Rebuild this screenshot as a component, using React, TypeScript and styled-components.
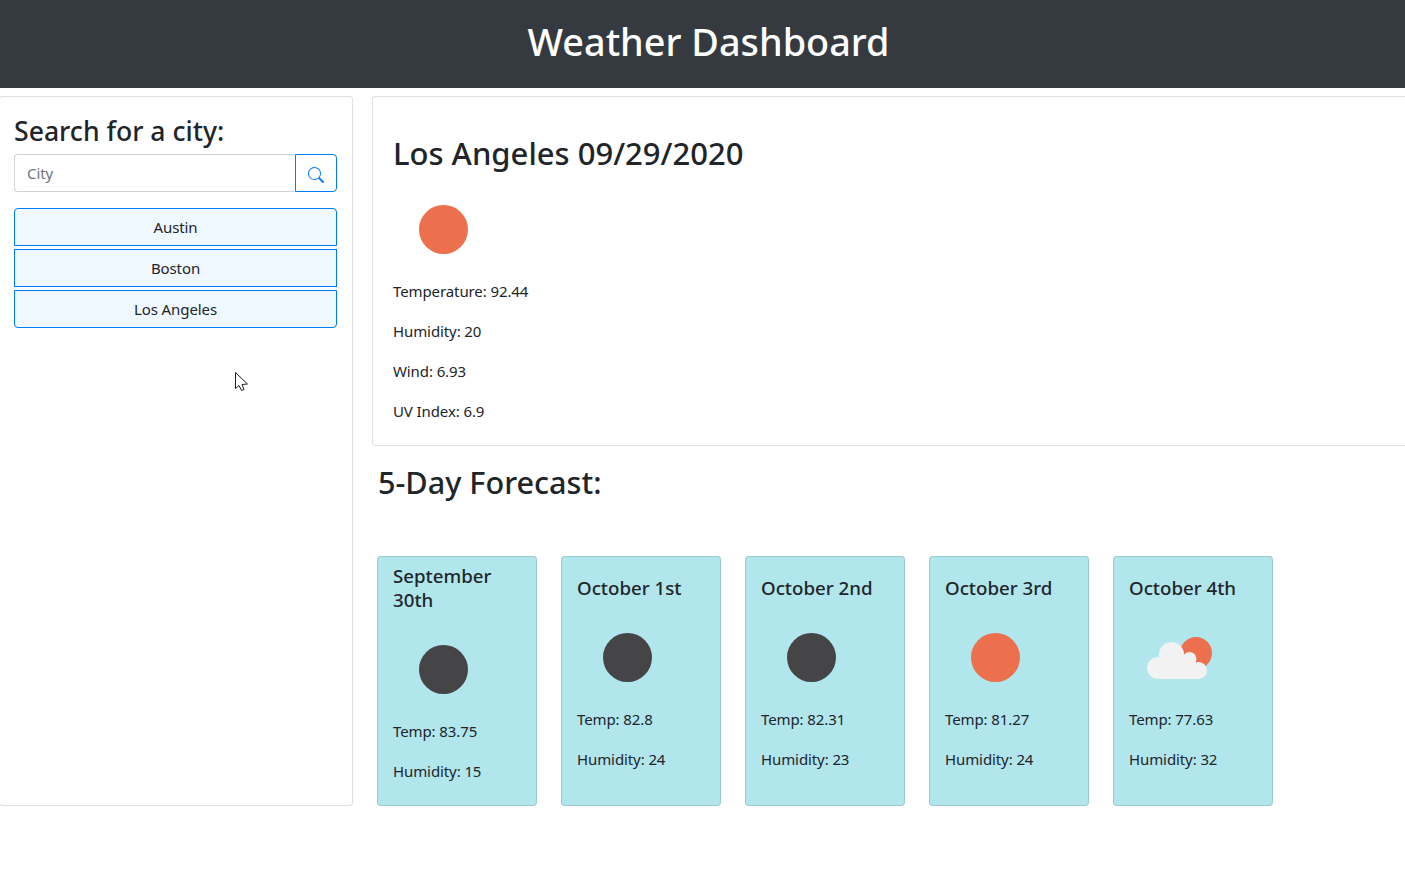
import React from 'react';
import styled, {createGlobalStyle} from 'styled-components';
import {BsSearch} from 'react-icons/bs';

const GlobalStyle = createGlobalStyle`
	html, body {
		margin: 0;
		padding: 0;
		background: #fff;
		overflow: hidden;
	}
	body {
		font-family: "Noto Sans", "Open Sans", sans-serif;
		font-size: 15px;
		line-height: 24px;
		letter-spacing: -0.1px;
		color: #212529;
	}
	* {
		box-sizing: border-box;
	}
`;

type IconKind = 'sun' | 'dark' | 'partly';

interface ForecastDay {
	title: string
	temp: number
	humidity: number
	icon: IconKind
}

const cities = ['Austin', 'Boston', 'Los Angeles'];

const forecast: ForecastDay[] = [
	{title: 'September 30th', temp: 83.75, humidity: 15, icon: 'dark'},
	{title: 'October 1st', temp: 82.8, humidity: 24, icon: 'dark'},
	{title: 'October 2nd', temp: 82.31, humidity: 23, icon: 'dark'},
	{title: 'October 3rd', temp: 81.27, humidity: 24, icon: 'sun'},
	{title: 'October 4th', temp: 77.63, humidity: 32, icon: 'partly'},
];

const WeatherIcon = ({kind}: {kind: IconKind}) => (
	<IconSvg viewBox="0 0 100 100">
		{kind === 'sun' && <circle cx="50.5" cy="49.5" r="24.5" fill="#ec6f4e"/>}
		{kind === 'dark' && <circle cx="50.5" cy="49.5" r="24.5" fill="#454547"/>}
		{kind === 'partly' && (
			<>
				<circle cx="67" cy="45" r="16" fill="#ec6f4e"/>
				<g fill="#f2f2f2">
					<circle cx="29" cy="60" r="11"/>
					<circle cx="42.5" cy="46.5" r="12.5"/>
					<circle cx="60.5" cy="51" r="7"/>
					<circle cx="69.5" cy="62.5" r="8.5"/>
					<rect x="29" y="55" width="40.5" height="16"/>
					<rect x="42" y="48" width="20" height="10"/>
				</g>
			</>
		)}
	</IconSvg>
);

export default function App() {
	return (
		<Page>
			<GlobalStyle/>
			<Header>Weather Dashboard</Header>
			<Content>
				<Sidebar>
					<SearchTitle>Search for a city:</SearchTitle>
					<SearchGroup>
						<CityInput placeholder="City" readOnly/>
						<SearchButton aria-label="Search"><BsSearch size={16}/></SearchButton>
					</SearchGroup>
					<CityList>
						{cities.map((city, i) => (
							<CityButton key={city} $first={i === 0} $last={i === cities.length - 1}>{city}</CityButton>
						))}
					</CityList>
				</Sidebar>
				<Main>
					<CurrentCard>
						<CityTitle>Los Angeles 09/29/2020</CityTitle>
						<WeatherIcon kind="sun"/>
						<Stat>Temperature: 92.44</Stat>
						<Stat>Humidity: 20</Stat>
						<Stat>Wind: 6.93</Stat>
						<Stat>UV Index: 6.9</Stat>
					</CurrentCard>
					<ForecastTitle>5-Day Forecast:</ForecastTitle>
					<ForecastRow>
						{forecast.map(day => (
							<ForecastCard key={day.title}>
								<DayTitle>{day.title}</DayTitle>
								<WeatherIcon kind={day.icon}/>
								<Stat>Temp: {day.temp}</Stat>
								<Stat>Humidity: {day.humidity}</Stat>
							</ForecastCard>
						))}
					</ForecastRow>
				</Main>
			</Content>
			<Cursor viewBox="0 0 14 20">
				<path d="M0.5 0.5 L0.5 16.5 L4 13.5 L6.5 18.5 L9 17.5 L7 12.5 L12.5 12 Z" fill="#fff" stroke="#222" strokeWidth="1"/>
			</Cursor>
		</Page>
	);
}

const Page = styled.div`
	position: relative;
	width: 1405px;
	height: 877px;
	overflow: hidden;
`;

const Header = styled.h1`
	margin: 0;
	height: 88px;
	padding-top: 18px;
	padding-left: 12px;
	background: #343a40;
	color: #fff;
	font-size: 37.8px;
	font-weight: 500;
	letter-spacing: 0;
	line-height: 48px;
	text-align: center;
`;

const Content = styled.div`
	display: grid;
	grid-template-columns: 354px 1fr;
	column-gap: 19px;
	margin: 8px -12px 0 -1px;
`;

const Sidebar = styled.div`
	height: 710px;
	padding: 18px 15px 0 14px;
	background: #fff;
	border: 1px solid rgba(0, 0, 0, .125);
	border-radius: 4px;
`;

const SearchTitle = styled.h3`
	margin: 0 0 5px;
	font-size: 26.6px;
	font-weight: 500;
	letter-spacing: 0;
	line-height: 33.6px;
`;

const SearchGroup = styled.div`
	display: flex;
	height: 38px;
`;

const CityInput = styled.input`
	flex: 1;
	min-width: 0;
	padding: 1px 12px 0;
	font: inherit;
	letter-spacing: inherit;
	color: #495057;
	background: #fff;
	border: 1px solid #ced4da;
	border-right: 0;
	border-radius: 4px 0 0 4px;
	outline: none;

	&::placeholder {
		color: #6c757d;
	}
`;

const SearchButton = styled.button`
	display: flex;
	align-items: center;
	justify-content: center;
	width: 42px;
	padding: 4px 0 0;
	color: #007bff;
	background: #fff;
	border: 1px solid #007bff;
	border-radius: 0 4px 4px 0;
`;

const CityList = styled.div`
	display: flex;
	flex-direction: column;
	gap: 3px;
	margin-top: 16px;
`;

const CityButton = styled.button<{$first: boolean, $last: boolean}>`
	height: 38px;
	padding: 0;
	font: inherit;
	letter-spacing: inherit;
	color: #212529;
	background: #f0f8ff;
	border: 1px solid #007bff;
	border-radius: ${p => p.$first ? '4px 4px 0 0' : p.$last ? '0 0 4px 4px' : '0'};
`;

const Main = styled.div`
	min-width: 0;
`;

const CurrentCard = styled.div`
	height: 350px;
	padding: 37px 20px 0;
	background: #fff;
	border: 1px solid rgba(0, 0, 0, .125);
	border-radius: 4px;
`;

const CityTitle = styled.h2`
	margin: 0 0 8px;
	font-size: 31px;
	font-weight: 500;
	letter-spacing: 0;
	line-height: 38.4px;
`;

const IconSvg = styled.svg`
	display: block;
	width: 100px;
	height: 100px;
`;

const Stat = styled.p`
	margin: 0 0 16px;
	padding-bottom: 2px;
	line-height: 22px;
`;

const ForecastTitle = styled.h3`
	margin: 20px 0 56px 6px;
	font-size: 30.6px;
	font-weight: 500;
	letter-spacing: 0;
	line-height: 33.6px;
`;

const ForecastRow = styled.div`
	display: flex;
	gap: 24px;
	margin-left: 5px;
`;

const ForecastCard = styled.div`
	display: flex;
	flex-direction: column;
	justify-content: center;
	width: 160px;
	height: 250px;
	padding: 2px 15px 0;
	background: #b0e6ec;
	border: 1px solid rgba(0, 0, 0, .125);
	border-radius: 4px;
`;

const DayTitle = styled.h5`
	margin: 0 0 8px;
	font-size: 18.7px;
	font-weight: 500;
	letter-spacing: 0;
	line-height: 24px;
`;

const Cursor = styled.svg`
	position: absolute;
	left: 235px;
	top: 372px;
	width: 14px;
	height: 20px;
`;
